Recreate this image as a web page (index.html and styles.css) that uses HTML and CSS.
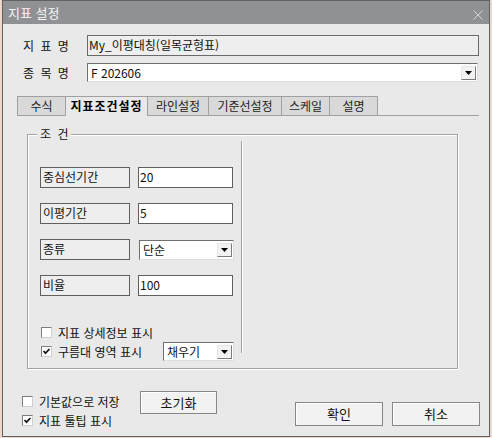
FILE: index.html
```html
<!DOCTYPE html>
<html lang="ko">
<head>
  <meta charset="UTF-8" />
  <title>지표 설정</title>
  <link rel="stylesheet" href="styles.css">
</head>
<body>

  <div class="dialog">
    <div class="title-bar">
      <span class="title">지표 설정</span>
      <svg class="close-btn" width="10" height="10" viewBox="0 0 10 10">
        <path d="M0.5 0.5 L9.5 9.5 M9.5 0.5 L0.5 9.5" stroke="#d4d6d8" stroke-width="1" fill="none"/>
      </svg>
    </div>

    <div class="field-row">
      <span class="field-label">지 표 명</span>
      <div class="field-box">My_이평대칭(일목균형표)</div>
    </div>

    <div class="field-row combo-row">
      <span class="field-label">종 목 명</span>
      <div class="combo wide">
        <span>F 202606</span>
        <span class="drop-btn">
          <svg width="7" height="4" viewBox="0 0 7 4"><path d="M0 0 H7 L3.5 4 Z" fill="#000"/></svg>
        </span>
      </div>
    </div>

    <!-- 탭 -->
    <div class="tab-bar">
      <div class="tab tab-formula">수식</div>
      <div class="tab tab-cond active">지표조건설정</div>
      <div class="tab tab-line">라인설정</div>
      <div class="tab tab-base">기준선설정</div>
      <div class="tab tab-scale">스케일</div>
      <div class="tab tab-desc">설명</div>
    </div>

    <div class="tab-panel">
      <div class="group">
        <span class="group-title">조 건</span>
        <div class="group-body">
          <div class="cond-col">
            <div class="cond-row">
              <span class="cond-label">중심선기간</span>
              <div class="cond-input">20</div>
            </div>
            <div class="cond-row">
              <span class="cond-label">이평기간</span>
              <div class="cond-input">5</div>
            </div>
            <div class="cond-row">
              <span class="cond-label">종류</span>
              <div class="combo small">
                <span>단순</span>
                <span class="drop-btn">
                  <svg width="7" height="4" viewBox="0 0 7 4"><path d="M0 0 H7 L3.5 4 Z" fill="#000"/></svg>
                </span>
              </div>
            </div>
            <div class="cond-row">
              <span class="cond-label">비율</span>
              <div class="cond-input">100</div>
            </div>

            <div class="check-row">
              <span class="check"></span>
              <span>지표 상세정보 표시</span>
            </div>
            <div class="check-row fill-row">
              <span class="check">
                <svg width="9" height="9" viewBox="0 0 9 9"><path d="M1.5 4 L3.5 6.2 L7.5 2" stroke="#1a1a1a" stroke-width="1.8" fill="none"/></svg>
              </span>
              <span>구름대 영역 표시</span>
              <div class="combo fill">
                <span>채우기</span>
                <span class="drop-btn">
                  <svg width="7" height="4" viewBox="0 0 7 4"><path d="M0 0 H7 L3.5 4 Z" fill="#000"/></svg>
                </span>
              </div>
            </div>
          </div>
          <div class="separator"></div>
        </div>
      </div>
    </div>

    <div class="footer">
      <div class="options">
        <div class="option">
          <span class="check"></span>
          <span>기본값으로 저장</span>
        </div>
        <div class="option">
          <span class="check">
            <svg width="9" height="9" viewBox="0 0 9 9"><path d="M1.5 4 L3.5 6.2 L7.5 2" stroke="#1a1a1a" stroke-width="1.8" fill="none"/></svg>
          </span>
          <span>지표 툴팁 표시</span>
        </div>
      </div>
      <button class="btn btn-reset">초기화</button>
      <button class="btn btn-ok">확인</button>
      <button class="btn btn-cancel">취소</button>
    </div>
  </div>

</body>
</html>
```

FILE: styles.css
```css
* {
  box-sizing: border-box;
}

body {
  margin: 0;
  background-color: #eed6c8;
  font-family: "Noto Sans CJK KR", "Noto Sans", sans-serif;
  font-size: 12px;
  color: #111;
}

.dialog {
  margin-left: 2px;
  width: 488px;
  height: 437px;
  border: 1px solid #5f6163;
  background-color: #e9e9e9;
}

.title-bar {
  height: 23px;
  background-color: #8f9194;
  display: flex;
  justify-content: space-between;
  align-items: flex-start;
  padding: 0 6px 0 5px;
}

.title {
  color: #f6f6f6;
  font-size: 13px;
  line-height: 23px;
}

.close-btn {
  display: block;
  margin-top: 9px;
}

/* 지표명 / 종목명 */
.field-row {
  display: flex;
  align-items: center;
  margin: 11px 0 0 20px;
}

.field-label {
  width: 64px;
  line-height: 16px;
  word-spacing: 3px;
}

.field-box {
  width: 392px;
  height: 21px;
  border: 1px solid #6a6a6a;
  background-color: #eeeeee;
  padding: 2px 0 0 1px;
  line-height: 14px;
}

.combo-row {
  margin-top: 7px;
}

.combo {
  display: flex;
  align-items: center;
  justify-content: space-between;
  background-color: #fff;
  border: 1px solid;
  border-color: #707070 #dedede #dedede #707070;
  line-height: 14px;
}

.combo.wide {
  width: 391px;
  height: 19px;
  padding: 0 1px 0 3px;
}

.combo.small {
  width: 95px;
  height: 20px;
  margin: 1px 0 0 9px;
  padding: 0 1px 0 3px;
}

.combo.fill {
  width: 71px;
  height: 19px;
  margin-left: auto;
  padding: 0 1px 0 3px;
}

.drop-btn {
  width: 15px;
  height: 14px;
  display: flex;
  align-items: center;
  justify-content: center;
  background-color: #f2f2f2;
  border: 1px solid;
  border-color: #e6e6e6 #7c7c7c #7c7c7c #e6e6e6;
}

.drop-btn svg {
  display: block;
}

/* 탭 */
.tab-bar {
  display: flex;
  margin: 14px 0 0 14px;
  width: 462px;
  height: 20px;
  border-bottom: 1px solid #a0a0a0;
}

.tab {
  height: 19px;
  line-height: 18px;
  text-align: center;
  border: 1px solid #a0a0a0;
  border-right: none;
  border-bottom: none;
  background-color: #d9d9d9;
  color: #222;
}

.tab:last-child {
  border-right: 1px solid #a0a0a0;
}

.tab.active {
  height: 20px;
  background-color: #e9e9e9;
  font-weight: bold;
  letter-spacing: 1px;
  color: #000;
}

.tab-formula { width: 48px; }
.tab-cond { width: 82px; }
.tab-line { width: 61px; }
.tab-base { width: 73px; }
.tab-scale { width: 48px; }
.tab-desc { width: 49px; }

.tab-panel {
  margin-left: 14px;
  width: 462px;
  padding: 18px 0 0 10px;
}

/* 조건 그룹 */
.group {
  width: 431px;
  border: 1px solid #a3a3a3;
  box-shadow: 1px 1px 0 #fff, inset 1px 1px 0 #fff;
}

.group-title {
  display: block;
  width: fit-content;
  margin: -8px 0 0 9px;
  padding: 0 3px;
  line-height: 14px;
  word-spacing: 3px;
  background-color: #e9e9e9;
}

.group-body {
  display: flex;
  align-items: flex-start;
}

.cond-col {
  width: 213px;
  padding: 26px 7px 7px 12px;
}

.separator {
  width: 2px;
  height: 212px;
  border-left: 1px solid #a0a0a0;
  border-right: 1px solid #fff;
}

.cond-row {
  display: flex;
  align-items: flex-start;
  height: 21px;
}

.cond-row + .cond-row {
  margin-top: 15px;
}

.cond-label {
  width: 90px;
  height: 21px;
  border: 1px solid #5f5f5f;
  background-color: #eeeeee;
  padding: 1px 0 0 2px;
  line-height: 15px;
}

.cond-input {
  width: 95px;
  height: 21px;
  margin-left: 8px;
  border: 1px solid #5f5f5f;
  background-color: #fff;
  padding: 1px 0 0 1px;
  line-height: 15px;
}

/* 체크박스 */
.check-row {
  display: flex;
  align-items: center;
  height: 16px;
  margin-top: 28px;
  padding-left: 1px;
}

.check-row.fill-row {
  height: 19px;
  margin-top: 2px;
}

.check {
  width: 11px;
  height: 11px;
  margin-right: 6px;
  background-color: #fff;
  border: 1px solid;
  border-color: #7d7d7d #cfcfcf #cfcfcf #7d7d7d;
}

.check svg {
  display: block;
}

/* 하단 */
.footer {
  display: flex;
  align-items: flex-start;
  margin: 22px 0 0 19px;
}

.options {
  width: 118px;
  margin-top: 1px;
}

.option {
  display: flex;
  align-items: center;
  height: 19px;
}

.btn {
  height: 23px;
  padding: 0;
  border: 1px solid #878787;
  background-color: #f2f2f2;
  box-shadow: inset 1px 1px 0 #fff;
  font-family: inherit;
  font-size: 13px;
  line-height: 20px;
  color: #111;
}

.btn-reset {
  width: 77px;
}

.btn-ok {
  width: 88px;
  height: 24px;
  margin: 11px 0 0 auto;
}

.btn-cancel {
  width: 88px;
  height: 24px;
  margin: 11px 9px 0 9px;
}
```
